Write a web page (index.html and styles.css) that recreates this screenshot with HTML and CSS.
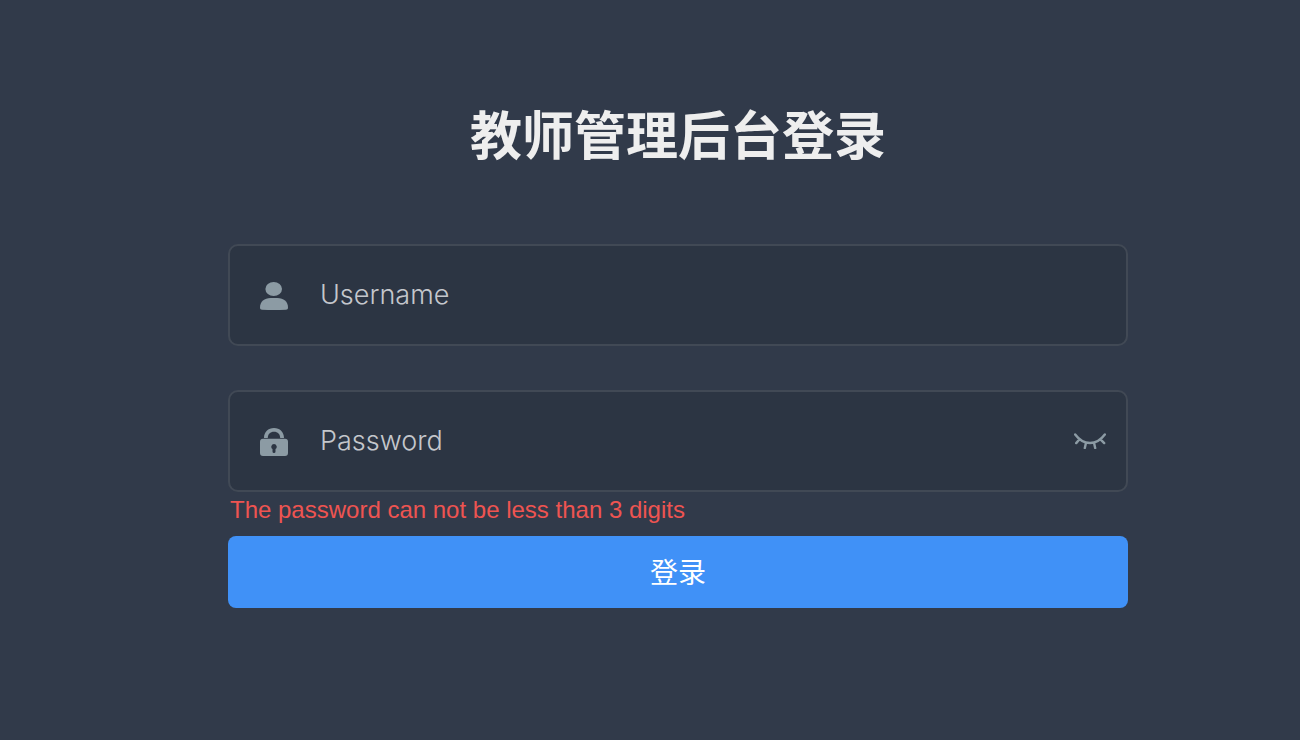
FILE: index.html
```html
<!doctype html>
<html lang="zh-CN">

<head>
    <meta charset="utf-8" />
    <title>教师管理后台登录</title>
    <link rel="icon" href="data:,">
    <meta name="viewport" content="width=device-width, initial-scale=1">
    <link rel="stylesheet" href="styles.css">
</head>

<body>
    <main class="login">
        <form class="login-form" novalidate>
            <h1 class="title">教师管理后台登录</h1>

            <div class="field">
                <label class="field-icon" for="username" aria-label="Username">
                    <svg viewBox="0 0 28 28" width="28" height="28" fill="currentColor">
                        <ellipse cx="13.7" cy="7" rx="8.3" ry="7" />
                        <path d="M0 25.5C0 19.5 4.5 16 10.5 16h7C23.5 16 28 19.5 28 25.5c0 1.5-.8 2.2-2 2.3Q14 28.2 2 27.8c-1.2-.1-2-.8-2-2.3z" />
                    </svg>
                </label>
                <input id="username" type="text" placeholder="Username" autocomplete="username">
            </div>

            <div class="field">
                <label class="field-icon" for="password" aria-label="Password">
                    <svg viewBox="0 0 28 28" width="28" height="28" fill="currentColor">
                        <path d="M4 10C4 4 8.2 0 14 0s10 4 10 10h-3.8C20.2 6 17.8 3.7 14 3.7S7.8 6 7.8 10z" />
                        <path fill-rule="evenodd" d="M3 10.7h22A3 3 0 0 1 28 13.7v11.3a3 3 0 0 1-3 3h-22A3 3 0 0 1 0 25V13.7a3 3 0 0 1 3-3zM14 16a2.8 2.8 0 0 0-1.5 5.1v2.3a1.5 1.5 0 0 0 3 0v-2.3A2.8 2.8 0 0 0 14 16z" />
                    </svg>
                </label>
                <input id="password" type="password" placeholder="Password" autocomplete="current-password"
                    aria-describedby="password-error">
                <button class="show-pwd" type="button" aria-label="Show password">
                    <svg viewBox="0 0 32 16" width="32" height="16" fill="none" stroke="currentColor"
                        stroke-width="2.4" stroke-linecap="round">
                        <path d="M1.2 1.5C9.5 12.8 22.5 12.8 30.8 1.5M5.5 6.3L2.2 10.1M12 9.8L10.8 15M20 9.8L21.2 15M26.5 6.3L30.2 10.1" />
                    </svg>
                </button>
            </div>
            <p class="error" id="password-error">The password can not be less than 3 digits</p>

            <button class="submit" type="submit">登录</button>
        </form>
    </main>
</body>

</html>
```

FILE: styles.css
```css
* {
    box-sizing: border-box;
}

body {
    margin: 0;
    min-height: 100vh;
    background: #313a4a;
    font-family: "Liberation Sans", "Noto Sans CJK SC", sans-serif;
}

.login {
    padding: 97px 0 96px 56px;
}

.login-form {
    max-width: 900px;
    margin: 0 auto;
}

.title {
    margin: 0 0 67px;
    color: #eee;
    font-size: 52px;
    font-weight: bold;
    line-height: 80px;
    text-align: center;
}

.field {
    display: flex;
    align-items: center;
    height: 102px;
    padding: 0 20px 0 30px;
    border: 2px solid #414955;
    border-radius: 10px;
    background: #2c3543;
    color: #8c9ba4;
}

.field + .field {
    margin-top: 44px;
}

.field-icon {
    display: flex;
    padding-top: 2px;
}

.field input {
    flex: 1;
    min-width: 0;
    height: 96px;
    padding: 0 32px 2px;
    border: 0;
    outline: none;
    background: transparent;
    color: #fff;
    font-family: Inter, "Noto Sans CJK SC", sans-serif;
    font-size: 27px;
    font-weight: 300;
}

.field input::placeholder {
    color: #c4c7cc;
    opacity: 1;
}

.show-pwd {
    display: flex;
    padding: 0;
    border: 0;
    background: none;
    color: inherit;
    cursor: pointer;
}

.error {
    margin: 0;
    padding: 4px 2px 12px;
    color: #ee5451;
    font-size: 24px;
    line-height: 28px;
}

.submit {
    display: block;
    width: 100%;
    height: 72px;
    padding: 0 0 2px;
    border: 0;
    border-radius: 8px;
    background: #4091f7;
    color: #fff;
    font-family: inherit;
    font-size: 28px;
    cursor: pointer;
}
```
